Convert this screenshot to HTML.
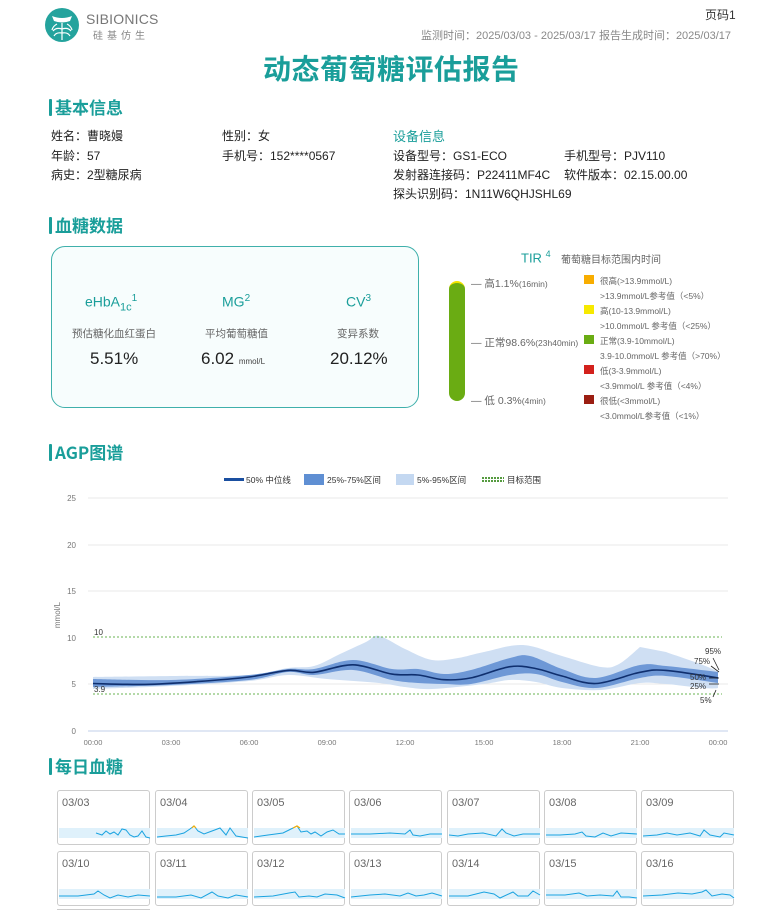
<!DOCTYPE html>
<html><head><meta charset="utf-8">
<style>
*{margin:0;padding:0;box-sizing:border-box}
body{width:776px;height:911px;overflow:hidden;background:#fff;font-family:"Liberation Sans","Noto Sans CJK SC",sans-serif;color:#222;position:relative}
.a{position:absolute;white-space:nowrap}
.t{color:#1a9e9a}
.h2{font-size:17px;font-weight:bold;color:#1a9e9a;font-family:"Noto Sans CJK SC",sans-serif}
.bar{position:absolute;width:3px;height:17px;background:#1a9e9a;border-radius:1px}
.f12{font-size:12px}
.g{color:#666}
.card{position:absolute;width:93px;height:55px;border:1px solid #ccc;border-radius:3px;background:#fff}
.card span{position:absolute;left:4px;top:6px;font-size:11px;color:#666}
.card svg{position:absolute;left:0;top:0}
</style></head><body>

<svg class="a" style="left:44px;top:7px" width="38" height="38" viewBox="0 0 38 38">
<circle cx="18" cy="18" r="17" fill="#24a39d"/>
<path d="M8 9 Q18 13 28 9 L26 14 Q18 17 10 14Z" fill="#fff"/>
<path d="M18 16 V33 M18 22 Q12 20 9 24 M18 26 Q12 25 10 29 M18 22 Q24 20 27 24 M18 26 Q24 25 26 29 M13 17 Q9 19 8 23 M23 17 Q27 19 28 23" stroke="#fff" stroke-width="1.2" fill="none"/>
</svg>
<div class="a" style="left:86px;top:11px;font-size:14px;color:#777;letter-spacing:0.2px">SIBIONICS</div>
<div class="a" style="left:93px;top:27px;font-size:10px;color:#888;letter-spacing:4px">硅基仿生</div>

<div class="a f12" style="left:705px;top:6px;color:#333">页码1</div>
<div class="a" style="left:421px;top:27px;font-size:11px;color:#888">监测时间：2025/03/03 - 2025/03/17 报告生成时间：2025/03/17</div>
<div class="a t" style="left:263px;top:48px;font-size:28px;font-weight:bold;font-family:'Noto Sans CJK SC',sans-serif;letter-spacing:0.5px">动态葡萄糖评估报告</div>

<div class="bar" style="left:49px;top:99px"></div>
<div class="a h2" style="left:55px;top:94px">基本信息</div>
<div class="a f12" style="left:51px;top:127px">姓名：曹晓嫚</div>
<div class="a f12" style="left:51px;top:147px">年龄：57</div>
<div class="a f12" style="left:51px;top:166px">病史：2型糖尿病</div>
<div class="a f12" style="left:222px;top:127px">性别：女</div>
<div class="a f12" style="left:222px;top:147px">手机号：152****0567</div>
<div class="a t" style="left:393px;top:126px;font-size:13px">设备信息</div>
<div class="a f12" style="left:393px;top:147px">设备型号：GS1-ECO</div>
<div class="a f12" style="left:564px;top:147px">手机型号：PJV110</div>
<div class="a f12" style="left:393px;top:166px">发射器连接码：P22411MF4C</div>
<div class="a f12" style="left:564px;top:166px">软件版本：02.15.00.00</div>
<div class="a f12" style="left:393px;top:185px">探头识别码：1N11W6QHJSHL69</div>

<div class="bar" style="left:49px;top:217px"></div>
<div class="a h2" style="left:55px;top:212px">血糖数据</div>
<div class="a" style="left:51px;top:246px;width:368px;height:162px;border:1.5px solid #3fb0ab;border-radius:14px;background:#f7fdfd"></div>
<div class="a t" style="left:85px;top:293px;font-size:14px">eHbA<sub style="font-size:11px">1c</sub><sup style="font-size:10px">1</sup></div>
<div class="a t" style="left:222px;top:293px;font-size:14px">MG<sup style="font-size:10px">2</sup></div>
<div class="a t" style="left:346px;top:293px;font-size:14px">CV<sup style="font-size:10px">3</sup></div>
<div class="a g" style="left:72px;top:326px;font-size:10.5px">预估糖化血红蛋白</div>
<div class="a g" style="left:205px;top:326px;font-size:10.5px">平均葡萄糖值</div>
<div class="a g" style="left:337px;top:326px;font-size:10.5px">变异系数</div>
<div class="a" style="left:90px;top:349px;font-size:17px">5.51%</div>
<div class="a" style="left:201px;top:349px;font-size:17px">6.02 <span style="font-size:8px;color:#444">mmol/L</span></div>
<div class="a" style="left:330px;top:349px;font-size:17px">20.12%</div>

<div class="a t" style="left:521px;top:249px;font-size:13px">TIR <sup style="font-size:9px">4</sup></div>
<div class="a g" style="left:561px;top:251px;font-size:10px">葡萄糖目标范围内时间</div>
<div class="a" style="left:449px;top:281px;width:16px;height:120px;border-radius:8px;background:#6aac13;border-top:2px solid #f4e300"></div>
<div class="a g" style="left:471px;top:276px;font-size:10.5px">— 高1.1%<span style="font-size:8.5px">(16min)</span></div>
<div class="a g" style="left:471px;top:335px;font-size:10.5px">— 正常98.6%<span style="font-size:8.5px">(23h40min)</span></div>
<div class="a g" style="left:471px;top:393px;font-size:10.5px">— 低 0.3%<span style="font-size:8.5px">(4min)</span></div>

<div class="a" style="left:584px;top:275px;width:10px;height:9px;background:#f8ad00"></div>
<div class="a" style="left:584px;top:305px;width:10px;height:9px;background:#f7e900"></div>
<div class="a" style="left:584px;top:335px;width:10px;height:9px;background:#6aac13"></div>
<div class="a" style="left:584px;top:365px;width:10px;height:9px;background:#d3211c"></div>
<div class="a" style="left:584px;top:395px;width:10px;height:9px;background:#9b1e12"></div>
<div class="a g" style="left:600px;top:274px;font-size:8.5px;line-height:15px">很高(&gt;13.9mmol/L)<br>&gt;13.9mmol/L参考值（&lt;5%）<br>高(10-13.9mmol/L)<br>&gt;10.0mmol/L 参考值（&lt;25%）<br>正常(3.9-10mmol/L)<br>3.9-10.0mmol/L 参考值（&gt;70%）<br>低(3-3.9mmol/L)<br>&lt;3.9mmol/L 参考值（&lt;4%）<br>很低(&lt;3mmol/L)<br>&lt;3.0mmol/L参考值（&lt;1%）</div>

<div class="bar" style="left:49px;top:444px"></div>
<div class="a h2" style="left:55px;top:439px">AGP图谱</div>

<svg class="a" style="left:0;top:470px" width="776" height="280" viewBox="0 470 776 280" font-family="Liberation Sans,Noto Sans CJK SC,sans-serif">
<g font-size="8.5" fill="#333">
<rect x="224" y="478" width="20" height="3" fill="#1a4fa0"/><text x="246" y="483">50% 中位线</text>
<rect x="304" y="474" width="20" height="11" fill="#5f8fd3"/><text x="327" y="483">25%-75%区间</text>
<rect x="396" y="474" width="18" height="11" fill="#c4d8f1"/><text x="417" y="483">5%-95%区间</text>
<line x1="482" y1="478" x2="504" y2="478" stroke="#1f7a00" stroke-width="1.5" stroke-dasharray="2,1"/><line x1="482" y1="481" x2="504" y2="481" stroke="#1f7a00" stroke-width="1.5" stroke-dasharray="2,1"/><text x="507" y="483">目标范围</text>
</g>
<g stroke="#e8e8e8" stroke-width="1">
<line x1="88" y1="498" x2="728" y2="498"/><line x1="88" y1="545" x2="728" y2="545"/><line x1="88" y1="591" x2="728" y2="591"/><line x1="88" y1="684" x2="728" y2="684"/>
</g>
<line x1="88" y1="731" x2="728" y2="731" stroke="#d6dff0" stroke-width="1.5"/>
<g font-size="8" fill="#777" text-anchor="end">
<text x="76" y="501">25</text><text x="76" y="548">20</text><text x="76" y="594">15</text><text x="76" y="641">10</text><text x="76" y="687">5</text><text x="76" y="734">0</text>
</g>
<text x="60" y="615" font-size="8" fill="#777" transform="rotate(-90 60 615)" text-anchor="middle">mmol/L</text>
<g font-size="7.5" fill="#777" text-anchor="middle">
<text x="93" y="745">00:00</text><text x="171" y="745">03:00</text><text x="249" y="745">06:00</text><text x="327" y="745">09:00</text><text x="405" y="745">12:00</text><text x="484" y="745">15:00</text><text x="562" y="745">18:00</text><text x="640" y="745">21:00</text><text x="718" y="745">00:00</text>
</g>
<polygon class="sm" fill="#cfdff3" points="93,677 171,676 249,675 288,668 314,666 340,654 366,642 379,636 405,649 432,660 458,658 484,652 523,645 562,656 601,667 619,664 640,647 666,652 718,672 718,688 666,684 640,683 601,690 562,688 536,682 510,680 484,684 432,689 405,687 379,683 327,679 288,675 249,681 171,686 93,689"/>
<polygon class="sm" fill="#6e98d6" points="93,679 171,680 249,675 288,669 314,669 353,660 392,669 418,669 444,674 471,670 510,658 530,656 562,669 596,678 640,665 666,666 718,672 718,683 666,676 640,678 596,688 562,682 536,674 510,675 471,684 444,684 418,683 392,680 353,670 314,675 288,672 249,680 171,685 93,687"/>
<polyline class="sm" fill="none" stroke="#0f2f6e" stroke-width="1.6" stroke-linejoin="round" points="93,683.5 145,684.4 197,681.6 249,677 288,670.4 314,672.3 353,664.8 392,674.1 418,675 444,679.7 471,677.9 510,666.7 536,668.6 562,676 596,683.5 640,672.3 666,670.4 718,677.9"/>
<line x1="93" y1="637" x2="722" y2="637" stroke="#3a9a1a" stroke-width="0.8" stroke-dasharray="2,2"/>
<line x1="93" y1="694" x2="722" y2="694" stroke="#3a9a1a" stroke-width="0.8" stroke-dasharray="2,2"/>
<g font-size="8" fill="#333">
<text x="94" y="635">10</text><text x="94" y="692">3.9</text>
<text x="705" y="654">95%</text><text x="694" y="664">75%</text><text x="690" y="680">50%</text><text x="690" y="689">25%</text><text x="700" y="703">5%</text>
</g>
<g stroke="#222" stroke-width="0.8">
<line x1="713" y1="658" x2="719" y2="670"/><line x1="711" y1="666" x2="719" y2="672"/><line x1="709" y1="678" x2="719" y2="678"/><line x1="709" y1="684" x2="719" y2="684"/><line x1="713" y1="697" x2="716" y2="690"/>
</g>
</svg>
<script>
document.querySelectorAll('.sm').forEach(function(el){
  var pts=el.getAttribute('points').trim().split(/\s+/).map(function(p){return p.split(',').map(Number)});
  var closed=el.tagName.toLowerCase()==='polygon';
  function seg(list){
    var d='';
    for(var i=0;i<list.length-1;i++){
      var p0=list[i-1]||list[i],p1=list[i],p2=list[i+1],p3=list[i+2]||p2;
      if(p1[0]===p2[0]){d+=' L'+p2[0]+','+p2[1];continue;}
      var c1=[p1[0]+(p2[0]-p0[0])/6,p1[1]+(p2[1]-p0[1])/6],c2=[p2[0]-(p3[0]-p1[0])/6,p2[1]-(p3[1]-p1[1])/6];
      d+=' C'+c1+' '+c2+' '+p2;
    }
    return d;
  }
  var d;
  if(closed){
    var n=pts.length/2;var up=pts.slice(0,n),lo=pts.slice(n);
    d='M'+up[0]+seg(up)+' L'+lo[0]+seg(lo)+' Z';
  } else d='M'+pts[0]+seg(pts);
  var p=document.createElementNS('http://www.w3.org/2000/svg','path');
  ['fill','stroke','stroke-width','stroke-linejoin'].forEach(function(a){if(el.getAttribute(a))p.setAttribute(a,el.getAttribute(a))});
  p.setAttribute('d',d);
  el.parentNode.replaceChild(p,el);
});
</script>

<div class="bar" style="left:49px;top:758px"></div>
<div class="a h2" style="left:55px;top:753px">每日血糖</div>

<div class="card" style="left:57px;top:790px"><span>03/03</span><svg width="93" height="55"><rect x="1" y="37" width="91" height="10" fill="#dff1fb"/><polyline fill="none" stroke="#1aa3e0" stroke-width="1" points="38,42 44,44 48,40 52,43 56,41 60,44 64,38 68,39 72,44 76,46 80,45 84,40 88,46 92,47"/></svg></div>
<div class="card" style="left:155px;top:790px"><span>03/04</span><svg width="93" height="55"><rect x="1" y="37" width="91" height="10" fill="#dff1fb"/><polyline fill="none" stroke="#1aa3e0" stroke-width="1" points="1,46 10,45 20,44 28,42 34,38 38,35 42,40 48,43 56,40 64,37 70,44 74,37 80,45 92,47"/><polyline fill="none" stroke="#f8ad00" stroke-width="1.2" points="36,37 38,35 40,37"/></svg></div>
<div class="card" style="left:252px;top:790px"><span>03/05</span><svg width="93" height="55"><rect x="1" y="37" width="91" height="10" fill="#dff1fb"/><polyline fill="none" stroke="#1aa3e0" stroke-width="1" points="1,46 15,44 30,42 38,38 44,35 48,41 54,40 58,43 62,41 68,45 74,41 80,39 86,43 92,43"/><polyline fill="none" stroke="#f8ad00" stroke-width="1.2" points="40,37 44,35 47,37"/></svg></div>
<div class="card" style="left:349px;top:790px"><span>03/06</span><svg width="93" height="55"><rect x="1" y="37" width="91" height="10" fill="#dff1fb"/><polyline fill="none" stroke="#1aa3e0" stroke-width="1" points="1,43 20,43 40,42 55,43 60,39 63,44 70,45 80,43 92,43"/></svg></div>
<div class="card" style="left:447px;top:790px"><span>03/07</span><svg width="93" height="55"><rect x="1" y="37" width="91" height="10" fill="#dff1fb"/><polyline fill="none" stroke="#1aa3e0" stroke-width="1" points="1,44 10,45 20,43 35,42 48,45 54,38 58,42 66,45 75,43 92,43"/></svg></div>
<div class="card" style="left:544px;top:790px"><span>03/08</span><svg width="93" height="55"><rect x="1" y="37" width="91" height="10" fill="#dff1fb"/><polyline fill="none" stroke="#1aa3e0" stroke-width="1" points="1,44 15,44 30,43 37,41 41,45 50,46 58,42 66,45 76,42 92,43"/></svg></div>
<div class="card" style="left:641px;top:790px"><span>03/09</span><svg width="93" height="55"><rect x="1" y="37" width="91" height="10" fill="#dff1fb"/><polyline fill="none" stroke="#1aa3e0" stroke-width="1" points="1,45 15,44 25,42 35,44 48,42 58,45 62,39 68,44 78,46 82,42 92,44"/></svg></div>

<div class="card" style="left:57px;top:851px"><span>03/10</span><svg width="93" height="55"><rect x="1" y="37" width="91" height="10" fill="#dff1fb"/><polyline fill="none" stroke="#1aa3e0" stroke-width="1" points="1,44 20,44 36,42 40,39 46,43 52,46 60,43 70,45 80,43 92,44"/></svg></div>
<div class="card" style="left:155px;top:851px"><span>03/11</span><svg width="93" height="55"><rect x="1" y="37" width="91" height="10" fill="#dff1fb"/><polyline fill="none" stroke="#1aa3e0" stroke-width="1" points="1,45 20,45 35,43 45,46 56,40 62,44 72,46 80,43 92,45"/></svg></div>
<div class="card" style="left:252px;top:851px"><span>03/12</span><svg width="93" height="55"><rect x="1" y="37" width="91" height="10" fill="#dff1fb"/><polyline fill="none" stroke="#1aa3e0" stroke-width="1" points="1,45 20,44 36,41 42,40 46,45 56,44 64,45 72,42 84,43 92,46"/></svg></div>
<div class="card" style="left:349px;top:851px"><span>03/13</span><svg width="93" height="55"><rect x="1" y="37" width="91" height="10" fill="#dff1fb"/><polyline fill="none" stroke="#1aa3e0" stroke-width="1" points="1,45 20,43 35,42 50,44 58,41 66,44 74,43 82,41 92,44"/></svg></div>
<div class="card" style="left:447px;top:851px"><span>03/14</span><svg width="93" height="55"><rect x="1" y="37" width="91" height="10" fill="#dff1fb"/><polyline fill="none" stroke="#1aa3e0" stroke-width="1" points="1,44 20,44 36,40 46,42 52,46 65,40 70,44 80,44 85,39 92,43"/></svg></div>
<div class="card" style="left:544px;top:851px"><span>03/15</span><svg width="93" height="55"><rect x="1" y="37" width="91" height="10" fill="#dff1fb"/><polyline fill="none" stroke="#1aa3e0" stroke-width="1" points="1,43 20,43 34,41 42,44 55,43 68,44 72,39 76,45 84,45 92,46"/></svg></div>
<div class="card" style="left:641px;top:851px"><span>03/16</span><svg width="93" height="55"><rect x="1" y="37" width="91" height="10" fill="#dff1fb"/><polyline fill="none" stroke="#1aa3e0" stroke-width="1" points="1,44 20,43 36,41 50,42 60,40 64,38 70,44 80,42 88,43 92,46"/></svg></div>
<div class="a" style="left:57px;top:909px;width:93px;height:4px;border-top:1px solid #ccc"></div>
</body></html>
